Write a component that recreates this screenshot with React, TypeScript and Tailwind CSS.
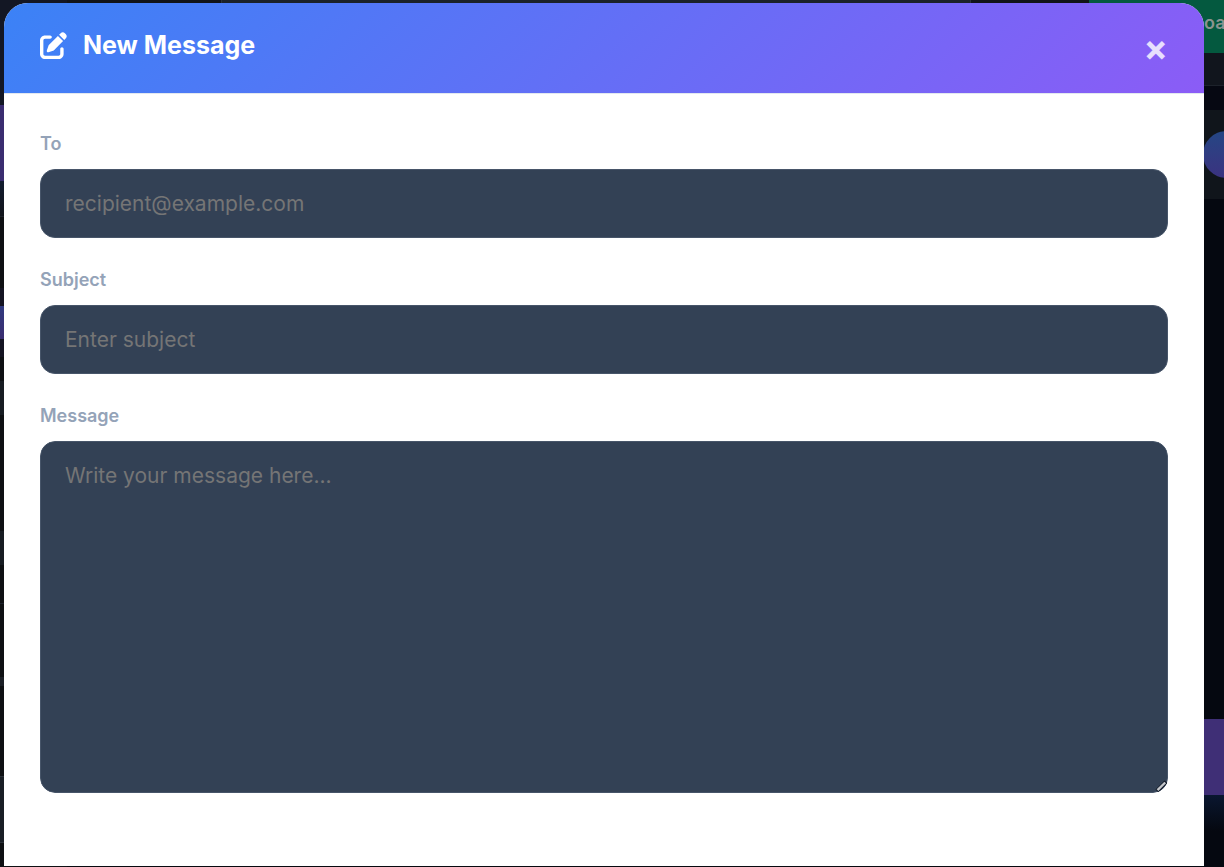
import { useState } from "react";
import { FaPenToSquare } from "react-icons/fa6";

const fieldClass =
  "block w-full rounded-[15px] border border-[#475569] bg-[#334155] px-6 text-[21px] leading-[31px] text-slate-100 placeholder:text-[#757575] outline-none";
const labelClass = "mb-3 block text-[18px] leading-[27px] font-semibold text-[#94a3b8]";

// Dimmed app behind the dialog, only its edges stay visible
function Backdrop() {
  return (
    <div className="absolute inset-0 flex overflow-hidden bg-[#07090f]" aria-hidden="true">
      <div className="flex w-[67px] flex-col bg-[#0e1013]">
        <div className="h-[105px] bg-[#131724]" />
        <div className="h-[76px] bg-[#3a2d70]" />
        <div className="h-9 border-b border-[#1d222b] bg-linear-to-b from-[#121c30] to-[#11141b]" />
        <div className="h-[71px]" />
        <div className="h-[18px] bg-[#141422]" />
        <div className="h-[33px] bg-linear-to-b from-[#303a80] to-[#3a2d70]" />
        <div className="h-[18px] bg-[#141422]" />
        <div className="h-6" />
        <div className="h-[34px] bg-[#171c22]" />
        <div className="h-[116px]" />
        <div className="h-[34px] bg-[#171c22]" />
        <div className="h-[39px] border-b border-[#1d222b]" />
        <div className="h-[73px]" />
        <div className="h-[9px] bg-[#1b1f26]" />
        <div className="h-[90px]" />
        <div className="h-[67px] border-y border-[#2a3038] bg-[#191e25]" />
      </div>
      <div className="flex-1">
        <div className="flex h-[53px] bg-[#111419]">
          <div className="ml-[154px] flex-1 border-x border-[#2a3038] bg-[#1b2229]" />
          <div className="w-[118px]" />
        </div>
      </div>
      <div className="flex w-[135px] flex-col">
        <div className="flex h-[53px] items-start overflow-hidden bg-[#04593f] pt-[9px] pl-[115px] text-[18px] leading-[27px] font-semibold text-[#8b9490]">
          oa
        </div>
        <div className="h-[33px] border-b border-[#1d222b] bg-[#11151d]" />
        <div className="h-6 bg-[#060812]" />
        <div className="flex h-[89px] items-center bg-[#10151b] pl-[114px]">
          <div className="size-[47px] shrink-0 rounded-full bg-linear-to-b from-[#234684] to-[#3a3280]" />
        </div>
        <div className="h-[520px] bg-[#050810]" />
        <div className="h-[76px] bg-[#3f2f76]" />
        <div className="flex-1 bg-linear-to-b from-[#0a1730] via-[#050810] to-[#050810]" />
      </div>
    </div>
  );
}

export default function App() {
  const [to, setTo] = useState("");
  const [subject, setSubject] = useState("");
  const [message, setMessage] = useState("");

  return (
    <div className="relative flex h-screen overflow-hidden font-['Inter',sans-serif]">
      <Backdrop />
      <div
        role="dialog"
        aria-labelledby="compose-title"
        className="relative mt-[3px] mr-5 mb-px ml-1 flex flex-1 flex-col overflow-hidden rounded-t-3xl bg-white"
      >
        <header className="flex items-start justify-between border-b border-slate-200 bg-[linear-gradient(135deg,#3b82f6,#8b5cf6)] px-9 py-6">
          <h2
            id="compose-title"
            className="flex items-center gap-4 text-[25px] leading-9 font-bold text-white"
          >
            <FaPenToSquare className="size-[27px]" />
            New Message
          </h2>
          <button
            type="button"
            aria-label="Close"
            className="h-[42px] text-[36px] leading-[42px] font-bold text-white/80"
          >
            ×
          </button>
        </header>

        <form className="flex flex-col gap-7 p-9">
          <div>
            <label htmlFor="to" className={labelClass}>To</label>
            <input
              id="to"
              type="email"
              placeholder="recipient@example.com"
              value={to}
              onChange={(e) => setTo(e.target.value)}
              className={`${fieldClass} h-[69px]`}
            />
          </div>
          <div>
            <label htmlFor="subject" className={labelClass}>Subject</label>
            <input
              id="subject"
              type="text"
              placeholder="Enter subject"
              value={subject}
              onChange={(e) => setSubject(e.target.value)}
              className={`${fieldClass} h-[69px]`}
            />
          </div>
          <div>
            <label htmlFor="message" className={labelClass}>Message</label>
            <div className="relative overflow-hidden rounded-[15px]">
              <textarea
                id="message"
                placeholder="Write your message here..."
                value={message}
                onChange={(e) => setMessage(e.target.value)}
                className={`${fieldClass} h-[352px] resize-y py-[18px] [&::-webkit-resizer]:hidden`}
              />
              {/* Resize grip */}
              <svg
                viewBox="0 0 13 13"
                className="pointer-events-none absolute right-0 bottom-0 size-[13px]"
                aria-hidden="true"
              >
                <path d="M0.5 9.5 L9.5 0.5 L12.5 3 L3.5 12.5 Z" fill="#111827" />
                <path d="M2.5 10.2 L10.2 2.5" stroke="#c4c7cb" strokeWidth="2.4" />
              </svg>
            </div>
          </div>
        </form>
      </div>
    </div>
  );
}
